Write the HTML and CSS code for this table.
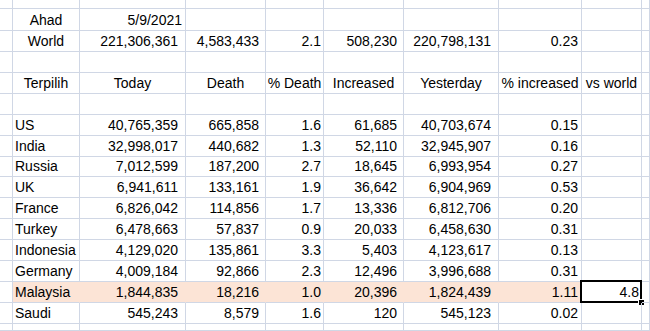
FILE: index.html
```html
<!DOCTYPE html>
<html>
<head>
<meta charset="utf-8">
<link rel="stylesheet" href="styles.css">
</head>
<body>
<div class="sheet">
  <div class="row r-top"><div class="c"></div><div class="c"></div><div class="c"></div><div class="c"></div><div class="c"></div><div class="c"></div><div class="c"></div><div class="c"></div><div class="c"></div><div class="c"></div></div>
  <div class="row r-first"><div class="c"></div><div class="c ctr">Ahad</div><div class="c num pd">5/9/2021</div><div class="c"></div><div class="c"></div><div class="c"></div><div class="c"></div><div class="c"></div><div class="c"></div><div class="c"></div></div>
  <div class="row"><div class="c"></div><div class="c ctr">World</div><div class="c num pb">221,306,361</div><div class="c num pc">4,583,433</div><div class="c num pdd">2.1</div><div class="c num pe">508,230</div><div class="c num pf">220,798,131</div><div class="c num pg">0.23</div><div class="c"></div><div class="c"></div></div>
  <div class="row"><div class="c"></div><div class="c"></div><div class="c"></div><div class="c"></div><div class="c"></div><div class="c"></div><div class="c"></div><div class="c"></div><div class="c"></div><div class="c"></div></div>
  <div class="row"><div class="c"></div><div class="c ctr">Terpilih</div><div class="c ctr">Today</div><div class="c ctr">Death</div><div class="c ctr">% Death</div><div class="c ctr">Increased</div><div class="c ctr">Yesterday</div><div class="c ctr">% increased</div><div class="c ctr">vs world</div><div class="c"></div></div>
  <div class="row"><div class="c"></div><div class="c"></div><div class="c"></div><div class="c"></div><div class="c"></div><div class="c"></div><div class="c"></div><div class="c"></div><div class="c"></div><div class="c"></div></div>
  <div class="row"><div class="c"></div><div class="c txt">US</div><div class="c num pb">40,765,359</div><div class="c num pc">665,858</div><div class="c num pdd">1.6</div><div class="c num pe">61,685</div><div class="c num pf">40,703,674</div><div class="c num pg">0.15</div><div class="c"></div><div class="c"></div></div>
  <div class="row"><div class="c"></div><div class="c txt">India</div><div class="c num pb">32,998,017</div><div class="c num pc">440,682</div><div class="c num pdd">1.3</div><div class="c num pe">52,110</div><div class="c num pf">32,945,907</div><div class="c num pg">0.16</div><div class="c"></div><div class="c"></div></div>
  <div class="row"><div class="c"></div><div class="c txt">Russia</div><div class="c num pb">7,012,599</div><div class="c num pc">187,200</div><div class="c num pdd">2.7</div><div class="c num pe">18,645</div><div class="c num pf">6,993,954</div><div class="c num pg">0.27</div><div class="c"></div><div class="c"></div></div>
  <div class="row"><div class="c"></div><div class="c txt">UK</div><div class="c num pb">6,941,611</div><div class="c num pc">133,161</div><div class="c num pdd">1.9</div><div class="c num pe">36,642</div><div class="c num pf">6,904,969</div><div class="c num pg">0.53</div><div class="c"></div><div class="c"></div></div>
  <div class="row"><div class="c"></div><div class="c txt">France</div><div class="c num pb">6,826,042</div><div class="c num pc">114,856</div><div class="c num pdd">1.7</div><div class="c num pe">13,336</div><div class="c num pf">6,812,706</div><div class="c num pg">0.20</div><div class="c"></div><div class="c"></div></div>
  <div class="row"><div class="c"></div><div class="c txt">Turkey</div><div class="c num pb">6,478,663</div><div class="c num pc">57,837</div><div class="c num pdd">0.9</div><div class="c num pe">20,033</div><div class="c num pf">6,458,630</div><div class="c num pg">0.31</div><div class="c"></div><div class="c"></div></div>
  <div class="row"><div class="c"></div><div class="c txt">Indonesia</div><div class="c num pb">4,129,020</div><div class="c num pc">135,861</div><div class="c num pdd">3.3</div><div class="c num pe">5,403</div><div class="c num pf">4,123,617</div><div class="c num pg">0.13</div><div class="c"></div><div class="c"></div></div>
  <div class="row"><div class="c"></div><div class="c txt">Germany</div><div class="c num pb">4,009,184</div><div class="c num pc">92,866</div><div class="c num pdd">2.3</div><div class="c num pe">12,496</div><div class="c num pf">3,996,688</div><div class="c num pg">0.31</div><div class="c"></div><div class="c"></div></div>
  <div class="row"><div class="c"></div><div class="c txt hl">Malaysia</div><div class="c num pb hl">1,844,835</div><div class="c num pc hl">18,216</div><div class="c num pdd hl">1.0</div><div class="c num pe hl">20,396</div><div class="c num pf hl">1,824,439</div><div class="c num pg hl">1.11</div><div class="c num ph sel">4.8</div><div class="c"></div></div>
  <div class="row"><div class="c"></div><div class="c txt">Saudi</div><div class="c num pb">545,243</div><div class="c num pc">8,579</div><div class="c num pdd">1.6</div><div class="c num pe">120</div><div class="c num pf">545,123</div><div class="c num pg">0.02</div><div class="c"></div><div class="c"></div></div>
  <div class="row r-last"><div class="c"></div><div class="c"></div><div class="c"></div><div class="c"></div><div class="c"></div><div class="c"></div><div class="c"></div><div class="c"></div><div class="c"></div><div class="c"></div></div>
</div>
</body>
</html>
```
FILE: styles.css
```css
html, body {
  margin: 0;
  padding: 0;
  background: #ffffff;
  overflow: hidden;
}
body {
  width: 650px;
  height: 331px;
  font-family: "Liberation Sans", Arial, sans-serif;
  font-size: 14px;
  color: #000000;
}
.sheet {
  display: flex;
  flex-direction: column;
  width: 650px;
  height: 331px;
}
.row {
  display: grid;
  grid-template-columns: 13px 67px 106px 80px 58px 80px 95px 83px 60px 1fr;
  height: 20.93px;
  flex: none;
}
.r-top { height: 9px; }
.r-first { height: 22px; }
.r-last { flex: 1; height: auto; }
.c {
  box-sizing: border-box;
  border-right: 1px solid #d0d7e5;
  border-bottom: 1px solid #d0d7e5;
  display: flex;
  align-items: flex-end;
  line-height: 16px;
  padding-bottom: 2px;
  white-space: nowrap;
  min-width: 0;
  position: relative;
}
.ctr { justify-content: center; }
.txt { justify-content: flex-start; padding-left: 2px; }
.num { justify-content: flex-end; }
.pb { padding-right: 7px; }
.pc { padding-right: 6px; }
.pdd { padding-right: 2px; }
.pd { padding-right: 3px; }
.pe { padding-right: 6px; }
.pf { padding-right: 7px; }
.pg { padding-right: 3px; }
.ph { padding-right: 2px; }
.hl {
  background: #fce4d6;
  border-right-color: #fce4d6;
}
.sel::before {
  content: "";
  position: absolute;
  left: -2px;
  top: -2px;
  right: -1px;
  bottom: -1px;
  border: 2px solid #000000;
}
.sel::after {
  content: "";
  position: absolute;
  right: -4px;
  bottom: -4px;
  width: 5px;
  height: 5px;
  background: #000000;
  border: 1px solid #ffffff;
}
```
